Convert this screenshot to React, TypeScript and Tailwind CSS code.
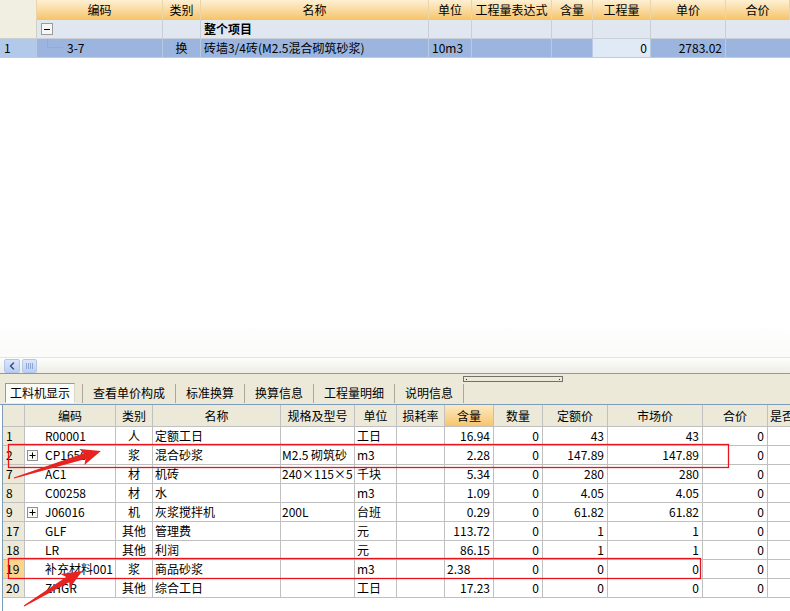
import { ChevronLeft } from 'lucide-react';

type BotRow = {
  n: string;
  plus?: boolean;
  code: string;
  cat: string;
  name: string;
  spec: string;
  unit: string;
  qty: string;
  num: string;
  quota: string;
  market: string;
  total: string;
  hl?: boolean;
  qtyLeft?: boolean;
};

// 上表列宽
const TOP_W = ['w-[37px]', 'w-[126px]', 'w-[38px]', 'w-[228px]', 'w-[43px]', 'w-[80px]', 'w-[41px]', 'w-[58px]', 'w-[75px]', 'w-[64px]'];
const TOP_HEAD = ['', '编码', '类别', '名称', '单位', '工程量表达式', '含量', '工程量', '单价', '合价'];

// 下表列宽
const BOT_W = ['w-[22px]', 'w-[91px]', 'w-[37px]', 'w-[128px]', 'w-[74px]', 'w-[42px]', 'w-[48px]', 'w-[49px]', 'w-[49px]', 'w-[65px]', 'w-[95px]', 'w-[65px]', 'w-[60px]'];
const BOT_HEAD = ['', '编码', '类别', '名称', '规格及型号', '单位', '损耗率', '含量', '数量', '定额价', '市场价', '合价', '是否'];

const rows: BotRow[] = [
  { n: '1', code: 'R00001', cat: '人', name: '定额工日', spec: '', unit: '工日', qty: '16.94', num: '0', quota: '43', market: '43', total: '0' },
  { n: '2', plus: true, code: 'CP1650', cat: '浆', name: '混合砂浆', spec: 'M2.5 砌筑砂', unit: 'm3', qty: '2.28', num: '0', quota: '147.89', market: '147.89', total: '0' },
  { n: '7', code: 'AC1', cat: '材', name: '机砖', spec: '240×115×5', unit: '千块', qty: '5.34', num: '0', quota: '280', market: '280', total: '0' },
  { n: '8', code: 'C00258', cat: '材', name: '水', spec: '', unit: 'm3', qty: '1.09', num: '0', quota: '4.05', market: '4.05', total: '0' },
  { n: '9', plus: true, code: 'J06016', cat: '机', name: '灰浆搅拌机', spec: '200L', unit: '台班', qty: '0.29', num: '0', quota: '61.82', market: '61.82', total: '0' },
  { n: '17', code: 'GLF', cat: '其他', name: '管理费', spec: '', unit: '元', qty: '113.72', num: '0', quota: '1', market: '1', total: '0' },
  { n: '18', code: 'LR', cat: '其他', name: '利润', spec: '', unit: '元', qty: '86.15', num: '0', quota: '1', market: '1', total: '0' },
  { n: '19', code: '补充材料001', cat: '浆', name: '商品砂浆', spec: '', unit: 'm3', qty: '2.38', num: '0', quota: '0', market: '0', total: '0', hl: true, qtyLeft: true },
  { n: '20', code: 'ZHGR', cat: '其他', name: '综合工日', spec: '', unit: '工日', qty: '17.23', num: '0', quota: '0', market: '0', total: '0' },
];

const tabs = ['查看单价构成', '标准换算', '换算信息', '工程量明细', '说明信息'];

function PlusBox() {
  return (
    <svg width="11" height="11" viewBox="0 0 11 11" className="shrink-0">
      <rect x="0.5" y="0.5" width="10" height="10" fill="#f8f8f6" stroke="#8f8f8f" />
      <path d="M2.5 5.5h6M5.5 2.5v6" stroke="#000" strokeWidth="1" />
    </svg>
  );
}

function MinusBox() {
  return (
    <svg width="12" height="12" viewBox="0 0 12 12" className="shrink-0">
      <rect x="0.5" y="0.5" width="11" height="11" fill="#f6f6f4" stroke="#9a9a9a" />
      <path d="M3 6.5h6" stroke="#000" strokeWidth="1" />
    </svg>
  );
}

function arrowPts(L: number) {
  return `0,-0.6 ${L - 17},-3 ${L - 20},-8.5 ${L},0 ${L - 20},8.5 ${L - 17},3 0,0.6`;
}

export default function App() {
  return (
    <div className="relative flex h-[611px] w-[790px] flex-col overflow-hidden bg-white font-['Noto_Sans_CJK_SC',sans-serif] text-[12px] text-black">
      {/* 上表 表头 */}
      <div className="flex h-[20px] shrink-0">
        {TOP_HEAD.map((h, i) => (
          <div
            key={i}
            className={`${TOP_W[i]} flex shrink-0 items-center justify-center border-r border-[#ead5aa] leading-none ${
              i === 0 ? 'bg-[#f1efe2]' : 'bg-linear-to-b from-[#fdf0d3] to-[#f6c366]'
            }`}
          >
            {h}
          </div>
        ))}
      </div>
      {/* 整个项目 */}
      <div className="flex h-[19px] shrink-0 border-b border-[#c9ced7] bg-[#e1e7f0]">
        <div className={`${TOP_W[0]} shrink-0 border-r border-[#d0cfc4] bg-[#efeedf]`} />
        <div className={`${TOP_W[1]} flex shrink-0 items-center border-r border-[#c9ced7] pl-[4px]`}>
          <MinusBox />
        </div>
        <div className={`${TOP_W[2]} shrink-0 border-r border-[#c9ced7]`} />
        <div className={`${TOP_W[3]} flex shrink-0 items-center border-r border-[#c9ced7] pl-[3px] font-bold`}>整个项目</div>
        <div className={`${TOP_W[4]} shrink-0 border-r border-[#c9ced7]`} />
        <div className={`${TOP_W[5]} shrink-0 border-r border-[#c9ced7]`} />
        <div className={`${TOP_W[6]} shrink-0 border-r border-[#c9ced7]`} />
        <div className={`${TOP_W[7]} shrink-0 border-r border-[#c9ced7]`} />
        <div className={`${TOP_W[8]} shrink-0 border-r border-[#c9ced7]`} />
        <div className={`${TOP_W[9]} shrink-0`} />
      </div>
      {/* 1 3-7 */}
      <div className="flex h-[19px] shrink-0 border-b border-[#c3cbd8] bg-[#9bb5de]">
        <div className={`${TOP_W[0]} flex shrink-0 items-center border-r border-[#b9cae4] bg-[#b3c9ea] pl-[4px]`}>1</div>
        <div className={`${TOP_W[1]} flex shrink-0 border-r border-[#b9cae4]`}>
          <div className="ml-[10px] h-[9px] w-[16px] self-start border-b border-l border-[#a9a9a9]" />
          <span className="ml-[4px] self-center">3-7</span>
        </div>
        <div className={`${TOP_W[2]} flex shrink-0 items-center justify-center border-r border-[#b9cae4]`}>换</div>
        <div className={`${TOP_W[3]} flex shrink-0 items-center whitespace-nowrap border-r border-[#b9cae4] pl-[3px]`}>砖墙3/4砖(M2.5混合砌筑砂浆)</div>
        <div className={`${TOP_W[4]} flex shrink-0 items-center border-r border-[#b9cae4] pl-[3px]`}>10m3</div>
        <div className={`${TOP_W[5]} shrink-0 border-r border-[#b9cae4]`} />
        <div className={`${TOP_W[6]} shrink-0 border-r border-[#b9cae4]`} />
        <div className={`${TOP_W[7]} flex shrink-0 items-center justify-end border-r border-[#b9cae4] bg-[#e0e9f6] pr-[3px]`}>0</div>
        <div className={`${TOP_W[8]} flex shrink-0 items-center justify-end border-r border-[#b9cae4] pr-[3px]`}>2783.02</div>
        <div className={`${TOP_W[9]} shrink-0`} />
      </div>
      {/* 空白区域 */}
      <div className="h-[260px] shrink-0 bg-white" />
      <div className="h-[39px] shrink-0 bg-linear-to-b from-white to-[#fbfbfa]" />
      {/* 横向滚动条 */}
      <div className="flex h-[17px] shrink-0 items-center gap-[2px] border-b border-t border-[#7f9db9] border-t-[#e4e4e0] bg-linear-to-b from-[#fdfdfc] to-[#eeede6] pl-[4px]">
        <div className="flex h-[14px] w-[16px] items-center justify-center rounded-[2px] border border-[#b3c5ea] bg-linear-to-b from-[#dbe6fb] to-[#b9cdf2]">
          <ChevronLeft size={12} strokeWidth={3} color="#3c4f7a" />
        </div>
        <div className="flex h-[14px] w-[15px] items-center justify-center gap-[1px] rounded-[2px] border border-[#b3c5ea] bg-linear-to-b from-[#dbe6fb] to-[#bdd0f3]">
          <span className="h-[6px] w-[1px] bg-[#8ea6d6]" />
          <span className="h-[6px] w-[1px] bg-[#8ea6d6]" />
          <span className="h-[6px] w-[1px] bg-[#8ea6d6]" />
          <span className="h-[6px] w-[1px] bg-[#8ea6d6]" />
        </div>
      </div>
      {/* 页签 */}
      <div className="flex h-[30px] shrink-0 flex-col bg-[#ece9d8]">
        <div className="ml-[463px] mt-[2px] flex h-[6px] w-[100px] items-center justify-between border border-[#707070] px-[2px]">
          <span className="h-[1px] w-[1px] bg-[#1a2a6c]" />
          <span className="h-[1px] w-[1px] bg-[#1a2a6c]" />
        </div>
        <div className="mt-[1px] flex h-[20px] items-center pl-[5px]">
          <div className="flex h-[20px] w-[70px] items-center justify-center border border-[#9a9a92] border-b-white border-r-[#d8d6c8] bg-[#fbfbf8]">工料机显示</div>
          <span className="ml-[7px] h-[19px] w-[1px] bg-[#aca899]" />
          {tabs.map((t) => (
            <div key={t} className="flex items-center">
              <span className="px-[10px] leading-[20px]">{t}</span>
              <span className="h-[19px] w-[1px] bg-[#aca899]" />
            </div>
          ))}
        </div>
      </div>
      {/* 下表 */}
      <div className="flex-1 border-t border-[#7f9db9] pl-[2px]">
        <div className="h-full border-l border-[#7f9db9]">
          <div className="flex h-[22px] border-b border-[#c0c0c0]">
            {BOT_HEAD.map((h, i) => (
              <div
                key={i}
                className={`${BOT_W[i]} flex shrink-0 items-center overflow-hidden whitespace-nowrap border-r border-[#c0c0c0] ${
                  i === 12 ? 'pl-[2px]' : 'justify-center'
                } ${i === 7 ? 'bg-linear-to-b from-[#fde9bf] to-[#f7c46c]' : 'bg-[#ece9d8]'}`}
              >
                {h}
              </div>
            ))}
          </div>
          {rows.map((r) => (
            <div key={r.n} className="flex h-[19px] border-b border-[#c0c0c0]">
              <div className={`${BOT_W[0]} flex shrink-0 items-center border-r border-[#c0c0c0] pl-[3px] ${r.hl ? 'bg-[#fdd48c]' : 'bg-[#ece9d8]'}`}>{r.n}</div>
              <div className={`${BOT_W[1]} flex shrink-0 items-center overflow-hidden whitespace-nowrap border-r border-[#c0c0c0] pl-[2px]`}>
                {r.plus ? <PlusBox /> : <span className="w-[11px] shrink-0" />}
                <span className="ml-[7px]">{r.code}</span>
              </div>
              <div className={`${BOT_W[2]} flex shrink-0 items-center justify-center border-r border-[#c0c0c0]`}>{r.cat}</div>
              <div className={`${BOT_W[3]} flex shrink-0 items-center overflow-hidden whitespace-nowrap border-r border-[#c0c0c0] pl-[2px]`}>{r.name}</div>
              <div className={`${BOT_W[4]} flex shrink-0 items-center overflow-hidden whitespace-nowrap border-r border-[#c0c0c0] pl-[1px]`}>{r.spec}</div>
              <div className={`${BOT_W[5]} flex shrink-0 items-center overflow-hidden whitespace-nowrap border-r border-[#c0c0c0] pl-[2px]`}>{r.unit}</div>
              <div className={`${BOT_W[6]} shrink-0 border-r border-[#c0c0c0]`} />
              <div className={`${BOT_W[7]} flex shrink-0 items-center border-r border-[#c0c0c0] ${r.qtyLeft ? 'pl-[2px]' : 'justify-end pr-[3px]'}`}>{r.qty}</div>
              <div className={`${BOT_W[8]} flex shrink-0 items-center justify-end border-r border-[#c0c0c0] pr-[3px]`}>{r.num}</div>
              <div className={`${BOT_W[9]} flex shrink-0 items-center justify-end border-r border-[#c0c0c0] pr-[3px]`}>{r.quota}</div>
              <div className={`${BOT_W[10]} flex shrink-0 items-center justify-end border-r border-[#c0c0c0] pr-[3px]`}>{r.market}</div>
              <div className={`${BOT_W[11]} flex shrink-0 items-center justify-end border-r border-[#c0c0c0] pr-[3px]`}>{r.total}</div>
              <div className={`${BOT_W[12]} shrink-0`} />
            </div>
          ))}
        </div>
      </div>

      {/* 红框和箭头标注 */}
      <svg className="pointer-events-none absolute left-0 top-0" width="790" height="611" viewBox="0 0 790 611">
        <rect x="8.5" y="444.5" width="720" height="23" fill="none" stroke="#e8141b" strokeWidth="1.3" />
        <rect x="8.5" y="558.5" width="692" height="20" fill="none" stroke="#e8141b" strokeWidth="1.3" />
        <g transform="translate(14 478) rotate(-17.2)">
          <polygon points={arrowPts(91)} fill="#e8231f" />
        </g>
        <g transform="translate(24 606) rotate(-31.1)">
          <polygon points={arrowPts(68)} fill="#e8231f" />
        </g>
      </svg>
    </div>
  );
}
